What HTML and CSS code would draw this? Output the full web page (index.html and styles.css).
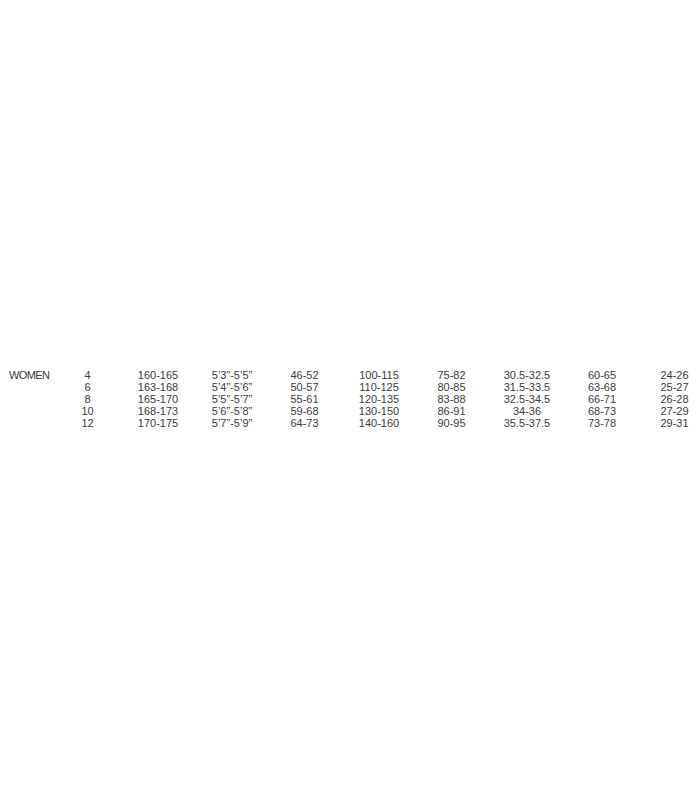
FILE: index.html
```html
<!DOCTYPE html>
<html lang="en">
<head>
<meta charset="utf-8">
<title>Size chart</title>
<link rel="stylesheet" href="styles.css">
</head>
<body>
<div class="page">
  <div class="chart">
    <div class="cell label">WOMEN</div><div class="cell">4</div><div class="cell">160-165</div><div class="cell">5’3”-5’5”</div><div class="cell">46-52</div><div class="cell">100-115</div><div class="cell">75-82</div><div class="cell">30.5-32.5</div><div class="cell">60-65</div><div class="cell last">24-26</div>
    <div class="cell label"></div><div class="cell">6</div><div class="cell">163-168</div><div class="cell">5’4”-5’6”</div><div class="cell">50-57</div><div class="cell">110-125</div><div class="cell">80-85</div><div class="cell">31.5-33.5</div><div class="cell">63-68</div><div class="cell last">25-27</div>
    <div class="cell label"></div><div class="cell">8</div><div class="cell">165-170</div><div class="cell">5’5”-5’7”</div><div class="cell">55-61</div><div class="cell">120-135</div><div class="cell">83-88</div><div class="cell">32.5-34.5</div><div class="cell">66-71</div><div class="cell last">26-28</div>
    <div class="cell label"></div><div class="cell">10</div><div class="cell">168-173</div><div class="cell">5’6”-5’8”</div><div class="cell">59-68</div><div class="cell">130-150</div><div class="cell">86-91</div><div class="cell">34-36</div><div class="cell">68-73</div><div class="cell last">27-29</div>
    <div class="cell label"></div><div class="cell">12</div><div class="cell">170-175</div><div class="cell">5’7”-5’9”</div><div class="cell">64-73</div><div class="cell">140-160</div><div class="cell">90-95</div><div class="cell">35.5-37.5</div><div class="cell">73-78</div><div class="cell last">29-31</div>
  </div>
</div>
</body>
</html>
```
FILE: styles.css
```css
html, body {
  margin: 0;
  padding: 0;
  background: #ffffff;
}
.page {
  width: 700px;
  height: 800px;
  display: flex;
  flex-direction: column;
  padding-top: 369px;
  box-sizing: border-box;
  font-family: "Liberation Sans", Arial, Helvetica, sans-serif;
  font-size: 11px;
  line-height: 12px;
  color: #3a3a3a;
}
.chart {
  display: grid;
  grid-template-columns: 60px 55px 86px 62px 83px 66px 79px 72px 78px 59px;
}
.cell {
  text-align: center;
  white-space: nowrap;
}
.label {
  text-align: left;
  padding-left: 9px;
  letter-spacing: -0.6px;
}
.last {
  padding-left: 8px;
}
```
